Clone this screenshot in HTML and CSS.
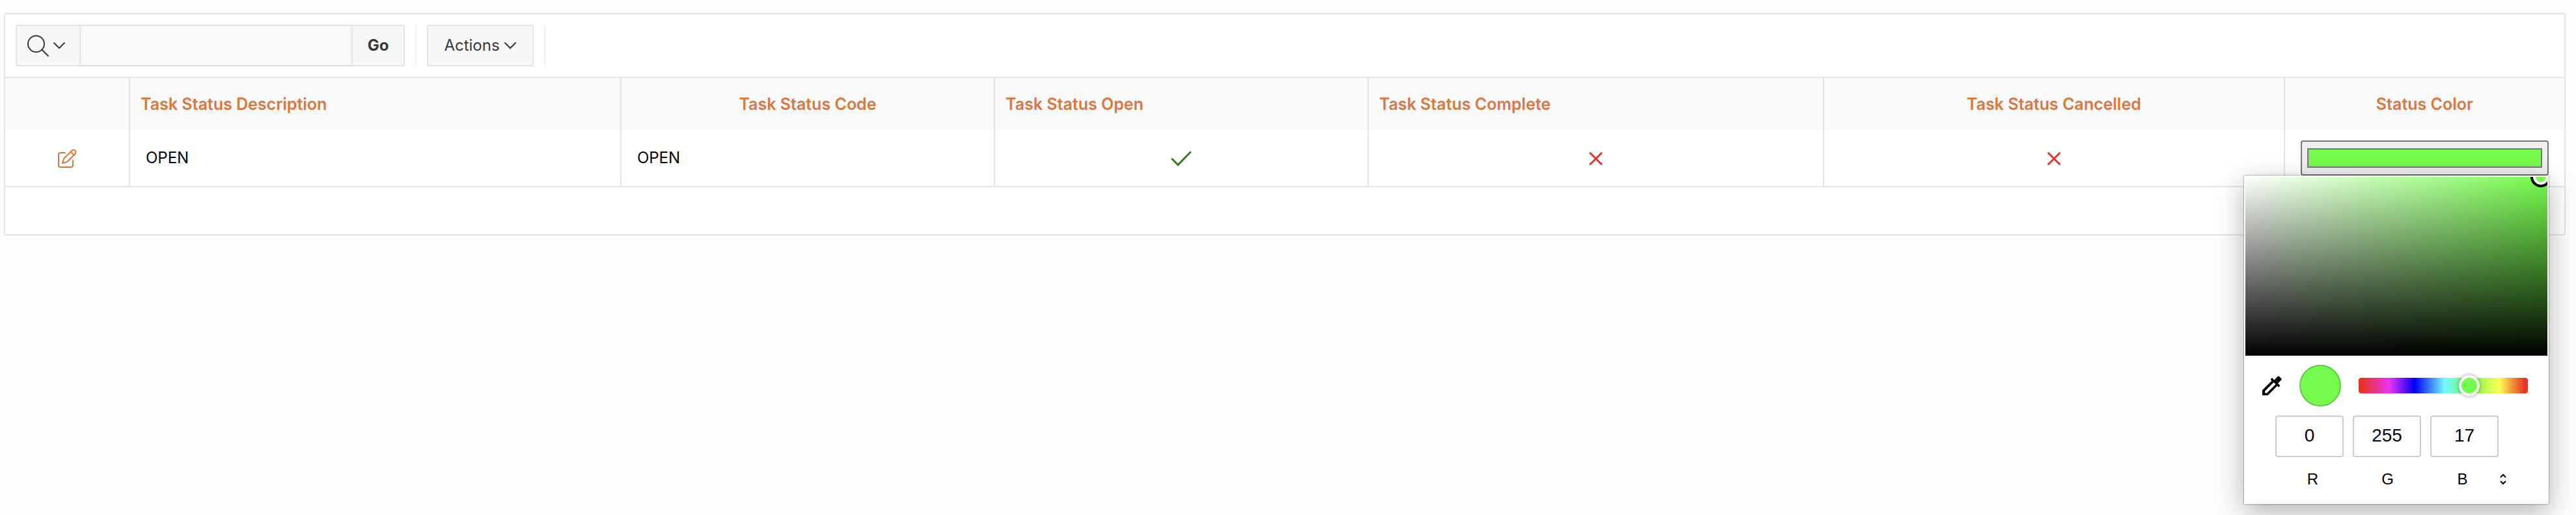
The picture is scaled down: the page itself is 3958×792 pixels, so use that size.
FILE: index.html
```
<!DOCTYPE html>
<html lang="en">
<head>
    <meta charset="UTF-8">
    <meta name="viewport" content="width=device-width, initial-scale=1.0">
    <title>Task Status</title>
    <link rel="stylesheet" href="styles.css">
</head>
<body>
<main class="report">
    <div class="toolbar">
        <div class="search-group">
            <button type="button" class="btn search-btn" aria-label="Select columns to search">
                <svg width="33" height="33" viewBox="0 0 33 33" fill="none" stroke="currentColor" stroke-width="2" stroke-linecap="round"><circle cx="13.500" cy="13.500" r="12.500"/><path d="M22.500 22.500L32 32"/></svg>
                <svg width="20" height="12" viewBox="0 0 20 12" fill="none" stroke="currentColor" stroke-width="2" stroke-linecap="round" stroke-linejoin="round"><path d="M2 2l8 8 8-8"/></svg>
            </button>
            <input type="text" class="search-input" aria-label="Search">
            <button type="button" class="btn go-btn">Go</button>
        </div>
        <span class="separator"></span>
        <button type="button" class="btn actions-btn">Actions
            <svg width="20" height="12" viewBox="0 0 20 12" fill="none" stroke="currentColor" stroke-width="2" stroke-linecap="round" stroke-linejoin="round"><path d="M2 2l8 8 8-8"/></svg>
        </button>
        <span class="separator"></span>
    </div>

    <table>
        <colgroup>
            <col class="col-edit">
            <col class="col-description">
            <col class="col-code">
            <col class="col-open">
            <col class="col-complete">
            <col class="col-cancelled">
            <col class="col-color">
        </colgroup>
        <thead>
        <tr>
            <th></th>
            <th><a href="#">Task Status Description</a></th>
            <th class="center"><a href="#">Task Status Code</a></th>
            <th><a href="#">Task Status Open</a></th>
            <th><a href="#">Task Status Complete</a></th>
            <th class="center"><a href="#">Task Status Cancelled</a></th>
            <th class="center"><a href="#">Status Color</a></th>
        </tr>
        </thead>
        <tbody>
        <tr>
            <td class="center">
                <a href="#" aria-label="Edit">
                    <svg width="30" height="30" viewBox="0 0 30 30" fill="none" stroke="currentColor" stroke-width="2" stroke-linecap="round" stroke-linejoin="round"><path d="M12 6H5a3 3 0 0 0-3 3v16a3 3 0 0 0 3 3h16a3 3 0 0 0 3-3v-7"/><path d="M8 22l2-7L22.500 2.500a3 3 0 0 1 5 5L15 20z"/><path d="M20.500 4.500l5 5"/></svg>
                </a>
            </td>
            <td>OPEN</td>
            <td>OPEN</td>
            <td class="center">
                <svg class="yes" role="img" aria-label="Yes" width="32" height="24" viewBox="0 0 32 24" fill="none" stroke="currentColor" stroke-width="3" stroke-linecap="round"><path d="M2 12.500l9 9L30 2"/></svg>
            </td>
            <td class="center">
                <svg class="no" role="img" aria-label="No" width="20" height="20" viewBox="0 0 20 20" fill="none" stroke="currentColor" stroke-width="3" stroke-linecap="round"><path d="M1.500 1.500l17 17M18.500 1.500l-17 17"/></svg>
            </td>
            <td class="center">
                <svg class="no" role="img" aria-label="No" width="20" height="20" viewBox="0 0 20 20" fill="none" stroke="currentColor" stroke-width="3" stroke-linecap="round"><path d="M1.500 1.500l17 17M18.500 1.500l-17 17"/></svg>
            </td>
            <td>
                <div class="color-field">
                    <input type="color" class="color-input" value="#75fb4c" aria-label="Status Color">
                    <div class="picker">
                        <div class="spectrum"><span class="spectrum-thumb"></span></div>
                        <div class="picker-row">
                            <button type="button" class="dropper" aria-label="Pick a color from the screen">
                                <svg width="30" height="30" viewBox="0 0 30 30"><path d="M0 22L14.500 7.500 12.500 5.500 15 3l3.500 3.500L23 1.500c1-1.500 2.500-1.500 3.500 0l2 2c1.500 1 1.500 2.500 0 3.500L24 11.500 27.500 15 25 17.500 23 15.500 8.500 30H0z"/><path d="M4 23.500L17.500 10l3 3L7 26.500H4z" fill="#fff"/></svg>
                            </button>
                            <span class="swatch"></span>
                            <input type="range" class="hue" min="0" max="360" value="243" aria-label="Hue">
                        </div>
                        <div class="channels">
                            <input type="text" id="red" value="0">
                            <input type="text" id="green" value="255">
                            <input type="text" id="blue" value="17">
                        </div>
                        <div class="channel-labels">
                            <label for="red">R</label>
                            <label for="green">G</label>
                            <label for="blue">B</label>
                            <button type="button" class="format-btn" aria-label="Change color format">
                                <svg width="10" height="16" viewBox="0 0 10 16" fill="none" stroke="currentColor" stroke-width="2"><path d="M1 5l4-4 4 4M1 11l4 4 4-4"/></svg>
                            </button>
                        </div>
                    </div>
                </div>
            </td>
        </tr>
        </tbody>
    </table>
    <div class="report-footer"></div>
</main>
</body>
</html>
```
FILE: styles.css
```
* {
    box-sizing: border-box;
}

body {
    min-height: 100vh;
    margin: 0;
    padding: 20px 16px 20px 6px;
    background-color: #fdfdfd;
    color: #000;
    font-family: Inter, 'Liberation Sans', sans-serif;
    font-size: 24px;
    line-height: 32px;
}

button, input {
    font: inherit;
    color: inherit;
}

svg {
    display: block;
}

.report {
    border: 2px solid #e4e4e4;
    border-radius: 4px;
    background-color: #fff;
}

.toolbar {
    display: flex;
    align-items: center;
    gap: 16px;
    padding: 16px;
}

.search-group {
    display: flex;
}

.btn {
    display: flex;
    align-items: center;
    justify-content: center;
    gap: 6px;
    height: 64px;
    padding: 0 16px;
    border: 2px solid #e4e4e4;
    border-radius: 4px;
    background-color: #f8f8f8;
    color: #383838;
    box-shadow: 0 2px 2px rgba(0, 0, 0, 0.02);
    cursor: pointer;
}

.search-btn {
    justify-content: flex-start;
    width: 100px;
    border-radius: 4px 0 0 4px;
}

.search-input {
    width: 416px;
    height: 64px;
    padding: 0 16px;
    border: solid #dedede;
    border-width: 2px 0;
    background-color: #f9f9f9;
}

.go-btn {
    width: 82px;
    border-radius: 0 4px 4px 0;
    font-weight: 700;
}

.separator {
    width: 2px;
    height: 64px;
    background-color: #f0f0f0;
}

.actions-btn {
    width: 164px;
}

table {
    width: 100%;
    table-layout: fixed;
    border-collapse: separate;
    border-spacing: 0;
    border: solid #e4e4e4;
    border-width: 2px 0;
}

.col-edit {
    width: 192px;
}

.col-description {
    width: 19.2%;
}

.col-code, .col-open {
    width: 14.6%;
}

.col-complete {
    width: 17.8%;
}

.col-cancelled {
    width: 18%;
}

th, td {
    padding: 0 16px;
    text-align: left;
    border-right: 2px solid #e4e4e4;
}

th:last-child, td:last-child {
    border-right: none;
}

th {
    height: 80px;
    background-color: #fafafa;
    font-size: 25px;
    font-weight: 600;
}

td {
    height: 86px;
    padding: 0 24px;
}

a {
    color: #d9773f;
    text-decoration: none;
}

.center {
    text-align: center;
}

.center svg {
    display: inline-block;
    vertical-align: middle;
}

.yes {
    color: #347d20;
}

.no {
    color: #ea3323;
}

.color-field {
    position: relative;
}

.color-input {
    display: block;
    width: 100%;
    height: 54px;
    padding: 10px 8px;
    border: 2px solid #767676;
    border-radius: 4px;
    background-color: #efefef;
}

.color-input::-webkit-color-swatch-wrapper {
    padding: 0;
}

.color-input::-webkit-color-swatch {
    border: 2px solid #777;
    border-radius: 0;
}

/* popup that opens under the color field */
.picker {
    position: absolute;
    top: 100%;
    right: 0;
    z-index: 1;
    width: 468px;
    padding: 2px 2px 22px;
    background-color: #fff;
    box-shadow: 0 0 2px rgba(0, 0, 0, 0.6), 0 12px 40px rgba(0, 0, 0, 0.3);
    font-family: 'Liberation Sans', Arial, sans-serif;
}

.spectrum {
    position: relative;
    height: 275px;
    overflow: hidden;
    background: linear-gradient(to top, #000, transparent), linear-gradient(to right, #fff, #75fb4c);
}

.spectrum-thumb {
    position: absolute;
    top: -16px;
    right: -6px;
    width: 32px;
    height: 32px;
    border: 4px solid #000;
    border-radius: 50%;
    background-color: #75fb4c;
    box-shadow: inset 0 0 0 4px #fff;
}

.picker-row {
    display: flex;
    align-items: center;
    padding: 14px 30px 14px 26px;
}

.dropper {
    padding: 0;
    border: none;
    background: none;
}

.swatch {
    width: 64px;
    height: 64px;
    margin: 0 27px;
    border: 2px solid #5fcb3f;
    border-radius: 50%;
    background-color: #75fb4c;
}

.hue {
    flex: 1;
    min-width: 0;
    height: 24px;
    margin: 0;
    border-radius: 4px;
    background: linear-gradient(to right, #ea3323 2%, #ea33f7 18%, #0000f5 33%, #75fbfd 51%, #75fb4c 66%, #ffff54 83%, #ea3323 98%);
    appearance: none;
}

.hue::-webkit-slider-thumb {
    width: 32px;
    height: 32px;
    border: 4px solid #fff;
    border-radius: 50%;
    background-color: #75fb4c;
    box-shadow: 0 0 6px rgba(0, 0, 0, 0.4);
    appearance: none;
}

.channels {
    display: flex;
    gap: 14px;
    padding-left: 46px;
}

.channels input {
    width: 105px;
    height: 64px;
    padding: 0 0 2px;
    border: 2px solid #ccc;
    border-radius: 4px;
    background-color: #fff;
    font-size: 28px;
    text-align: center;
}

.channel-labels {
    display: flex;
    align-items: center;
    margin-top: 18px;
    padding-left: 46px;
}

.channel-labels label {
    width: 115px;
    text-align: center;
}

.format-btn {
    padding: 0;
    border: none;
    background: none;
}

.report-footer {
    height: 72px;
}
```
